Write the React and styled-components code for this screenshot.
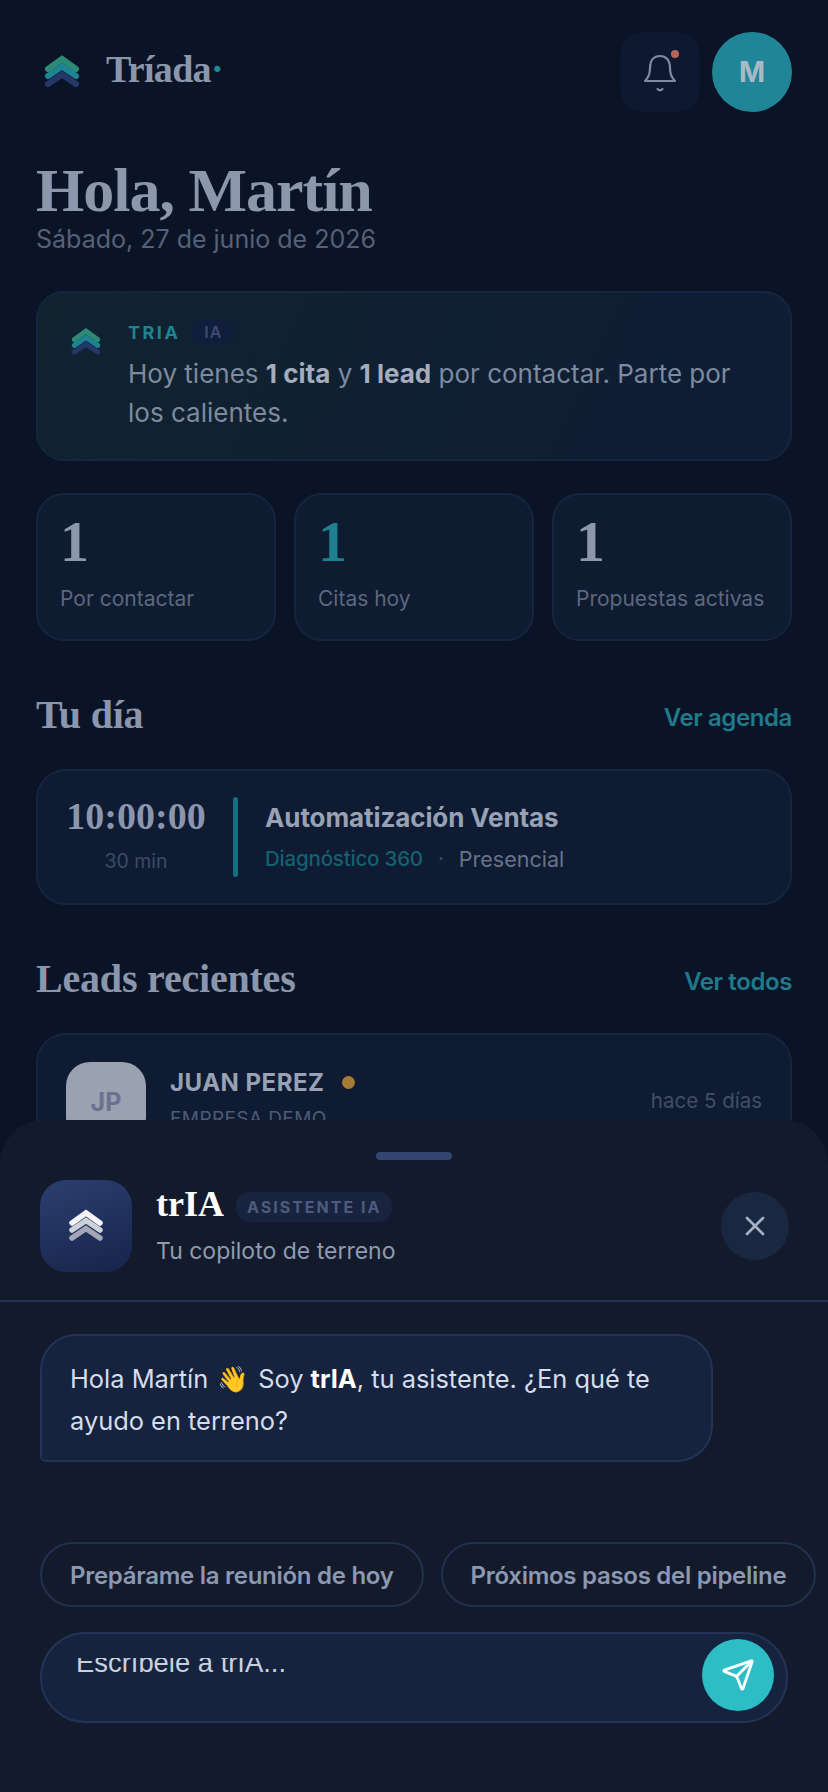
import styled, { createGlobalStyle } from "styled-components"
import { Send, X } from "lucide-react"

const GlobalStyle = createGlobalStyle`
    html, body {
        margin: 0;
        padding: 0;
        background: #0b1426;
    }
    * {
        box-sizing: border-box;
    }
`

const sans = `"Inter", "Noto Sans", sans-serif`
const serif = `"Liberation Serif", "DejaVu Serif", serif`

const Chevrons = ({ colors, size = 36, stroke = 6 }) => (
    <svg width={size} height={size} viewBox="0 0 36 36" fill="none">
        <path d="M4 30 L18 20.5 L32 30" stroke={colors[2]} strokeWidth={stroke} strokeLinecap="round" strokeLinejoin="miter" />
        <path d="M4 22 L18 12.5 L32 22" stroke={colors[1]} strokeWidth={stroke} strokeLinecap="round" strokeLinejoin="miter" />
        <path d="M4 15 L18 5 L32 15" stroke={colors[0]} strokeWidth={stroke} strokeLinecap="round" strokeLinejoin="miter" />
    </svg>
)

const brandColors = ["#2c8a76", "#1d8493", "#253769"]
const whiteColors = ["#f4f5f8", "#cdd1da", "#a2a7b6"]

const App = () => {
    return (
        <Screen>
            <GlobalStyle />
            <Page>
                <Header>
                    <Brand>
                        <Chevrons colors={brandColors} />
                        <BrandName>Tríada<BrandDot>·</BrandDot></BrandName>
                    </Brand>
                    <HeaderActions>
                        <BellButton>
                            <svg width="40" height="44" viewBox="0 0 40 44" fill="none" stroke="#808aa1" strokeWidth="2.2" strokeLinecap="round" strokeLinejoin="round">
                                <path d="M5 31 C9 27 10 24 10 18 C10 10 14 6 20 6 C26 6 30 10 30 18 C30 24 31 27 35 31 Z" />
                                <path d="M17.5 39 C19 40.5 21 40.5 22.5 39" />
                            </svg>
                            <BellDot />
                        </BellButton>
                        <Avatar>M</Avatar>
                    </HeaderActions>
                </Header>

                <Greeting>Hola, Martín</Greeting>
                <DateLine>Sábado, 27 de junio de 2026</DateLine>

                <TriaCard>
                    <TriaLogo>
                        <Chevrons colors={brandColors} size={30} stroke={6} />
                    </TriaLogo>
                    <div>
                        <TriaTop>
                            <TriaName>TRIA</TriaName>
                            <TriaBadge>IA</TriaBadge>
                        </TriaTop>
                        <TriaText>
                            Hoy tienes <strong>1 cita</strong> y <strong>1 lead</strong> por contactar. Parte por los calientes.
                        </TriaText>
                    </div>
                </TriaCard>

                <Stats>
                    <StatCard>
                        <StatNumber>1</StatNumber>
                        <StatLabel>Por contactar</StatLabel>
                    </StatCard>
                    <StatCard>
                        <StatNumber accent>1</StatNumber>
                        <StatLabel>Citas hoy</StatLabel>
                    </StatCard>
                    <StatCard>
                        <StatNumber>1</StatNumber>
                        <StatLabel>Propuestas activas</StatLabel>
                    </StatCard>
                </Stats>

                <SectionHead>
                    <SectionTitle>Tu día</SectionTitle>
                    <SectionLink>Ver agenda</SectionLink>
                </SectionHead>

                <DayCard>
                    <TimeBox>
                        <Time>10:00:00</Time>
                        <Duration>30 min</Duration>
                    </TimeBox>
                    <DayBar />
                    <DayBody>
                        <DayTitle>Automatización Ventas</DayTitle>
                        <DayMeta>
                            <DayType>Diagnóstico 360</DayType>
                            <DaySep>·</DaySep>
                            <DayPlace>Presencial</DayPlace>
                        </DayMeta>
                    </DayBody>
                </DayCard>

                <LeadsHead>
                    <SectionTitle>Leads recientes</SectionTitle>
                    <SectionLink>Ver todos</SectionLink>
                </LeadsHead>

                <LeadCard>
                    <LeadAvatar>JP</LeadAvatar>
                    <LeadInfo>
                        <LeadName>JUAN PEREZ <LeadDot /></LeadName>
                        <LeadCompany>EMPRESA DEMO</LeadCompany>
                    </LeadInfo>
                    <LeadTime>hace 5 días</LeadTime>
                </LeadCard>
            </Page>

            <Sheet>
                <Handle />
                <SheetHeader>
                    <SheetIcon>
                        <Chevrons colors={whiteColors} size={36} stroke={5.5} />
                    </SheetIcon>
                    <SheetTitles>
                        <SheetTitleRow>
                            <SheetTitle>trIA</SheetTitle>
                            <SheetBadge>ASISTENTE IA</SheetBadge>
                        </SheetTitleRow>
                        <SheetSub>Tu copiloto de terreno</SheetSub>
                    </SheetTitles>
                    <CloseButton>
                        <X size={32} strokeWidth={2} color="#a7b0c2" />
                    </CloseButton>
                </SheetHeader>

                <Messages>
                    <Bubble>
                        Hola Martín <Wave>👋</Wave> Soy <strong>trIA</strong>, tu asistente. ¿En qué te ayudo en terreno?
                    </Bubble>
                </Messages>

                <Chips>
                    <Chip>Prepárame la reunión de hoy</Chip>
                    <Chip>Próximos pasos del pipeline</Chip>
                </Chips>

                <InputBar>
                    <InputClip>
                        <Placeholder>Escríbele a trIA...</Placeholder>
                    </InputClip>
                    <SendButton>
                        <Send size={34} strokeWidth={2} color="#ffffff" />
                    </SendButton>
                </InputBar>
            </Sheet>
        </Screen>
    )
}

export default App

const Screen = styled.div`
    position: relative;
    width: 828px;
    height: 1792px;
    overflow: hidden;
    background: #0b1426;
    font-family: ${sans};
`

const Page = styled.div`
    padding: 32px 36px 0;
`

const Header = styled.header`
    display: flex;
    justify-content: space-between;
    align-items: center;
`

const Brand = styled.div`
    display: flex;
    align-items: center;
    gap: 26px;
    padding-left: 8px;
`

const BrandName = styled.div`
    margin-top: -6px;
    font-family: ${serif};
    font-weight: 700;
    font-size: 38px;
    color: #8b96ac;
    letter-spacing: -0.7px;
`

const BrandDot = styled.span`
    color: #1f8a96;
`

const HeaderActions = styled.div`
    display: flex;
    gap: 12px;
`

const BellButton = styled.div`
    position: relative;
    width: 80px;
    height: 80px;
    border-radius: 24px;
    background: #0e1830;
    display: flex;
    align-items: center;
    justify-content: center;
`

const BellDot = styled.span`
    position: absolute;
    top: 18px;
    right: 21px;
    width: 8px;
    height: 8px;
    border-radius: 50%;
    background: #b5655a;
`

const Avatar = styled.div`
    width: 80px;
    height: 80px;
    border-radius: 50%;
    background: #1f8597;
    color: #a9bac6;
    font-weight: 700;
    font-size: 28px;
    display: flex;
    align-items: center;
    justify-content: center;
`

const Greeting = styled.h1`
    margin: 43px 0 0;
    font-family: ${serif};
    font-weight: 700;
    font-size: 62px;
    line-height: 70px;
    color: #8c97ae;
    letter-spacing: -1px;
`

const DateLine = styled.div`
    margin-top: -2px;
    font-size: 25px;
    line-height: 32px;
    color: #566179;
`

const TriaCard = styled.section`
    margin-top: 36px;
    height: 170px;
    border-radius: 28px;
    border: 2px solid #16253f;
    background: linear-gradient(115deg, #10232f, #0f1c35);
    display: flex;
    padding: 28px 33px;
    gap: 27px;
`

const TriaLogo = styled.div`
    margin-top: 6px;
`

const TriaTop = styled.div`
    display: flex;
    align-items: center;
    gap: 12px;
    height: 26px;
    margin-top: -2px;
`

const TriaName = styled.span`
    font-weight: 700;
    font-size: 18px;
    letter-spacing: 2.5px;
    color: #1f8494;
`

const TriaBadge = styled.span`
    padding: 2px 12px;
    border-radius: 8px;
    background: #111d3a;
    font-size: 16px;
    font-weight: 600;
    letter-spacing: 1px;
    color: #3e4b6e;
`

const TriaText = styled.p`
    margin: 9px 0 0;
    font-size: 26px;
    line-height: 39px;
    color: #7d8a9f;
    strong {
        font-weight: 700;
        color: #a3adbe;
    }
`

const Stats = styled.div`
    margin-top: 32px;
    display: grid;
    grid-template-columns: repeat(3, 1fr);
    gap: 18px;
`

const StatCard = styled.div`
    height: 148px;
    border-radius: 28px;
    border: 2px solid #16253f;
    background: #0e1b30;
    padding: 14px 22px;
`

const StatNumber = styled.div`
    font-family: ${serif};
    font-weight: 700;
    font-size: 58px;
    line-height: 66px;
    color: ${({ accent }) => (accent ? "#1f8090" : "#8c97ae")};
`

const StatLabel = styled.div`
    margin-top: 11px;
    font-size: 21px;
    white-space: nowrap;
    color: #5c687f;
`

const SectionHead = styled.div`
    margin-top: 51px;
    display: flex;
    justify-content: space-between;
    align-items: center;
    height: 44px;
`

const LeadsHead = styled(SectionHead)`
    margin-top: 51px;
`

const SectionTitle = styled.h2`
    margin: 0;
    font-family: ${serif};
    font-weight: 700;
    font-size: 40px;
    letter-spacing: -0.2px;
    color: #8b96ac;
`

const SectionLink = styled.span`
    margin-top: 6px;
    font-size: 24px;
    font-weight: 600;
    letter-spacing: -0.4px;
    color: #1f7a8b;
`

const DayCard = styled.section`
    margin-top: 33px;
    height: 136px;
    border-radius: 30px;
    border: 2px solid #16253f;
    background: #0e1b33;
    display: flex;
    align-items: center;
    padding: 0 27px;
`

const TimeBox = styled.div`
    width: 142px;
    margin-top: -8px;
    text-align: center;
`

const Time = styled.div`
    font-family: ${serif};
    font-weight: 700;
    font-size: 38px;
    color: #8b96ac;
`

const Duration = styled.div`
    margin-top: 11px;
    font-size: 19.5px;
    color: #3e4a64;
`

const DayBar = styled.div`
    width: 5px;
    height: 80px;
    margin: 0 27px 0 26px;
    border-radius: 3px;
    background: #14707f;
`

const DayBody = styled.div`
    margin-top: 0;
`

const DayTitle = styled.div`
    font-size: 26px;
    font-weight: 700;
    letter-spacing: -0.1px;
    color: #97a2b5;
`

const DayMeta = styled.div`
    margin-top: 11px;
    display: flex;
    align-items: center;
    gap: 15px;
    font-size: 20.5px;
`

const DayType = styled.span`
    font-weight: 500;
    letter-spacing: -0.2px;
    color: #14616f;
`

const DaySep = styled.span`
    color: #3e4a64;
`

const DayPlace = styled.span`
    margin-top: 2px;
    font-size: 21.5px;
    color: #687388;
`

const LeadCard = styled.section`
    margin-top: 33px;
    height: 150px;
    border-radius: 30px;
    border: 2px solid #16253f;
    background: #0e1b33;
    display: flex;
    padding: 27px 28px;
    gap: 24px;
`

const LeadAvatar = styled.div`
    width: 80px;
    height: 80px;
    border-radius: 24px;
    background: #9aa1b0;
    color: #6b7291;
    font-weight: 700;
    font-size: 25px;
    display: flex;
    align-items: center;
    justify-content: center;
`

const LeadInfo = styled.div`
    flex: 1;
    padding-top: 6px;
`

const LeadName = styled.div`
    display: flex;
    align-items: center;
    gap: 18px;
    font-size: 24px;
    font-weight: 700;
    letter-spacing: 0.5px;
    color: #97a2b5;
`

const LeadDot = styled.span`
    width: 13px;
    height: 13px;
    border-radius: 50%;
    background: #a57c33;
`

const LeadCompany = styled.div`
    margin-top: 10px;
    font-size: 19px;
    letter-spacing: 0.4px;
    color: #4f5b74;
`

const LeadTime = styled.div`
    padding-top: 26px;
    font-size: 20.5px;
    color: #434e66;
`

const Sheet = styled.section`
    position: absolute;
    left: 0;
    right: 0;
    bottom: 0;
    height: 672px;
    border-radius: 44px 44px 0 0;
    background: #121a2c;
    display: flex;
    flex-direction: column;
`

const Handle = styled.div`
    flex: none;
    width: 76px;
    height: 8px;
    margin: 32px auto 0;
    border-radius: 4px;
    background: #33456e;
`

const SheetHeader = styled.div`
    flex: none;
    height: 142px;
    padding: 20px 39px 0 40px;
    border-bottom: 2px solid #233352;
    display: flex;
    align-items: flex-start;
`

const SheetIcon = styled.div`
    width: 92px;
    height: 92px;
    border-radius: 26px;
    background: linear-gradient(160deg, #2b3f70, #16244a);
    display: flex;
    align-items: center;
    justify-content: center;
`

const SheetTitles = styled.div`
    flex: 1;
    margin-left: 24px;
`

const SheetTitleRow = styled.div`
    display: flex;
    align-items: center;
    gap: 12px;
    height: 48px;
`

const SheetTitle = styled.div`
    font-family: ${serif};
    font-weight: 700;
    font-size: 36px;
    color: #ffffff;
`

const SheetBadge = styled.span`
    margin-top: 6px;
    padding: 5px 11px;
    border-radius: 14px;
    background: #18243f;
    font-size: 16px;
    font-weight: 700;
    letter-spacing: 2px;
    color: #4e5b7d;
`

const SheetSub = styled.div`
    margin-top: 9px;
    font-size: 23px;
    color: #8f9bb0;
`

const CloseButton = styled.div`
    width: 68px;
    height: 68px;
    margin-top: 12px;
    border-radius: 50%;
    background: #1a2740;
    display: flex;
    align-items: center;
    justify-content: center;
`

const Messages = styled.div`
    flex: 1;
    padding: 32px 40px 0;
`

const Bubble = styled.div`
    width: 673px;
    height: 128px;
    padding: 22px 28px;
    border-radius: 36px 36px 36px 6px;
    border: 2px solid #223355;
    background: #16233f;
    font-size: 25.4px;
    line-height: 41px;
    color: #d5dcea;
    strong {
        font-weight: 700;
        color: #ffffff;
    }
`

const Wave = styled.span`
    margin: 0 2px;
    font-family: "Noto Color Emoji", sans-serif;
`

const Chips = styled.div`
    flex: none;
    padding-left: 40px;
    display: flex;
    gap: 17px;
    white-space: nowrap;
`

const Chip = styled.div`
    height: 65px;
    padding: 2px 28px 0;
    border-radius: 33px;
    border: 2px solid #22304f;
    font-size: 24px;
    font-weight: 600;
    letter-spacing: -0.28px;
    color: #8c98b0;
    display: flex;
    align-items: center;
`

const InputBar = styled.div`
    position: relative;
    flex: none;
    width: 748px;
    height: 91px;
    margin: 25px 0 69px 40px;
    border-radius: 46px;
    border: 2px solid #223355;
    background: #16233f;
`

const InputClip = styled.div`
    margin: 24px 0 0 34px;
    height: 20px;
    overflow: hidden;
`

const Placeholder = styled.div`
    margin-top: -10px;
    font-family: "Liberation Sans", sans-serif;
    font-size: 27.4px;
    line-height: 30px;
    color: #c9d1df;
`

const SendButton = styled.div`
    position: absolute;
    top: 5px;
    right: 12px;
    width: 72px;
    height: 72px;
    border-radius: 50%;
    background: #2dbdc4;
    display: flex;
    align-items: center;
    justify-content: center;
`
